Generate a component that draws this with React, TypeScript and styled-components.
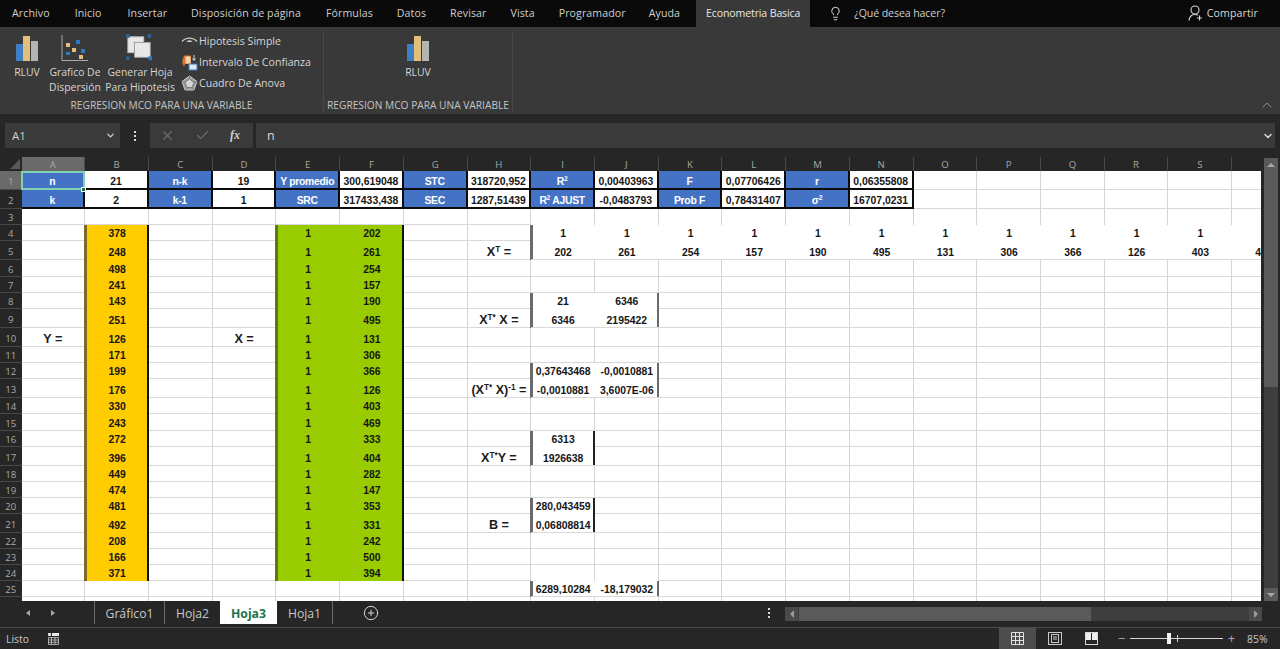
import React from "react";
import styled, { createGlobalStyle } from "styled-components";
import { Check, ChevronDown, ChevronUp, CirclePlus, Lightbulb, X } from "lucide-react";

const UI_FONT = `"Open Sans", "Noto Sans", sans-serif`;
const CELL_FONT = `"Liberation Sans", Arial, sans-serif`;

const GlobalStyle = createGlobalStyle`
  html, body {
    margin: 0;
    padding: 0;
    background: #262626;
    overflow: hidden;
  }
  * { box-sizing: border-box; }
  sup { font-size: 65%; line-height: 0; vertical-align: 4px; }
`;

const Page = styled.div`
  width: 1280px;
  height: 649px;
  display: flex;
  flex-direction: column;
  overflow: hidden;
  font-family: ${UI_FONT};
  color: #d8d8d8;
  background: #262626;
`;

/* ---- top tabs ---- */

const TabBar = styled.div`
  height: 27px;
  flex: none;
  display: flex;
  align-items: stretch;
  background: #0a0a0a;
  font-size: 10.6px;
  letter-spacing: 0.1px;
`;

const MenuTab = styled.div<{ $left: number; $active?: boolean }>`
  margin-left: ${(p) => p.$left}px;
  padding: 0 ${(p) => (p.$active ? "10px" : "0")} 1px;
  flex: none;
  display: flex;
  align-items: center;
  white-space: nowrap;
  letter-spacing: ${(p) => (p.$active ? "-0.15px" : "inherit")};
  color: ${(p) => (p.$active ? "#e6e6e6" : "#cfcfcf")};
  background: ${(p) => (p.$active ? "#393939" : "transparent")};
`;

const AskLabel = styled(MenuTab)`
  letter-spacing: -0.1px;
`;

const TabSpacer = styled.div`
  flex: 1;
`;

const ShareBox = styled.div`
  display: flex;
  align-items: center;
  gap: 4px;
  padding: 0 22px 1px 0;
`;

const BulbBox = styled.div`
  margin-left: 18px;
  display: flex;
  align-items: center;
  color: #e4e4e4;
`;

/* ---- ribbon ---- */

const Ribbon = styled.div`
  height: 87px;
  flex: none;
  display: flex;
  position: relative;
  background: #393939;
`;

const RibbonGroup = styled.div<{ $width: number }>`
  width: ${(p) => p.$width}px;
  flex: none;
  margin-top: 4px;
  margin-bottom: 2px;
  border-right: 1px solid #4a4a4a;
  display: flex;
  flex-direction: column;
`;

const GroupBody = styled.div<{ $pad: number }>`
  flex: 1;
  display: flex;
  padding-left: ${(p) => p.$pad}px;
`;

const GroupLabel = styled.div`
  height: 15px;
  text-align: center;
  font-size: 10.2px;
  line-height: 16px;
  white-space: nowrap;
  color: #c4c4c4;
`;

const BigButton = styled.div<{ $width: number }>`
  width: ${(p) => p.$width}px;
  flex: none;
  display: flex;
  flex-direction: column;
  align-items: center;
  padding-top: 1px;
  font-size: 10.4px;
  line-height: 15px;
  text-align: center;
  white-space: nowrap;
  color: #d6d6d6;
`;

const BigIcon = styled.div`
  height: 32px;
  margin-bottom: 1px;
  display: flex;
  align-items: center;
`;

const SmallColumn = styled.div`
  margin-left: 5px;
  padding-top: 2px;
  display: flex;
  flex-direction: column;
  gap: 5px;
`;

const SmallButton = styled.div`
  height: 16px;
  display: flex;
  align-items: center;
  gap: 1px;
  font-size: 10.6px;
  white-space: nowrap;
  color: #d6d6d6;
`;

const CollapseBox = styled.div`
  position: absolute;
  right: 5px;
  bottom: 1px;
  color: #a0a0a0;
  display: flex;
`;

/* ---- formula bar ---- */

const FormulaBar = styled.div`
  height: 43px;
  flex: none;
  padding: 9px 5px 9px 5px;
  display: flex;
  background: #262626;
`;

const NameBox = styled.div`
  width: 115px;
  flex: none;
  padding: 0 4px 0 7px;
  display: flex;
  align-items: center;
  justify-content: space-between;
  background: #3a3a3a;
  font-size: 11.5px;
  color: #d0d0d0;
`;

const DotsBox = styled.div`
  width: 30px;
  flex: none;
  display: flex;
  flex-direction: column;
  align-items: center;
  justify-content: center;
  gap: 2px;
`;

const Dot = styled.span`
  width: 2px;
  height: 2px;
  background: #d8d8d8;
`;

const ActionBox = styled.div`
  width: 103px;
  flex: none;
  padding-left: 10px;
  display: flex;
  align-items: center;
  gap: 20px;
  background: #3a3a3a;
  color: #6e6e6e;
`;

const FxLabel = styled.span`
  font-family: "Liberation Serif", serif;
  font-style: italic;
  font-weight: 700;
  font-size: 12px;
  color: #cfcfcf;
`;

const FormulaInput = styled.div`
  flex: 1;
  margin-left: 3px;
  padding: 0 1px 0 11px;
  display: flex;
  align-items: center;
  justify-content: space-between;
  background: #3a3a3a;
  font-size: 12.5px;
  color: #d8d8d8;
`;

/* ---- sheet ---- */

const rowHeights = [19, 19, 16, 16, 19, 17, 16, 16, 19, 19, 16, 16, 19, 16, 17, 16, 19, 16, 16, 16, 19, 16, 16, 16, 16, 16];
const columns = "ABCDEFGHIJKLMNOPQRST".split("");

const SheetArea = styled.div`
  height: 444px;
  flex: none;
  display: flex;
  background: #262626;
`;

const Sheet = styled.div`
  width: 1261px;
  height: 444px;
  flex: none;
  overflow: hidden;
  display: grid;
  position: relative;
  grid-template-columns: 21.5px repeat(20, 63.72px);
  grid-template-rows: 14px ${rowHeights.map((h) => `${h}px`).join(" ")};
  font-family: ${CELL_FONT};
  background: #fff;
`;

const Corner = styled.div`
  background: #262626;
  display: flex;
  align-items: flex-end;
  justify-content: flex-end;
  padding: 0 2px 2px 0;
`;

const CornerMark = styled.span`
  width: 0;
  height: 0;
  border-left: 10px solid transparent;
  border-bottom: 10px solid #5a5a5a;
`;

const ColHead = styled.div<{ $active?: boolean }>`
  display: flex;
  align-items: center;
  justify-content: center;
  background: ${(p) => (p.$active ? "#6a6a6a" : "#262626")};
  border-right: 1px solid #484848;
  font-family: ${UI_FONT};
  font-size: 9.6px;
  color: #a8a8a8;
`;

const RowHead = styled.div<{ $active?: boolean }>`
  display: flex;
  align-items: center;
  justify-content: center;
  padding-top: 2px;
  background: ${(p) => (p.$active ? "#6a6a6a" : "#262626")};
  border-bottom: 1px solid #484848;
  font-family: ${UI_FONT};
  font-size: 9.6px;
  color: #aaaaaa;
`;

type Tone = "plain" | "blue" | "value" | "yellow" | "green" | "matrix";

type CellSpec = {
  text?: React.ReactNode;
  tone?: Tone;
  big?: boolean;
  barLeft?: string;
  barRight?: string;
  noBottom?: boolean;
};

const fills: Record<Tone, string> = {
  plain: "#ffffff",
  blue: "#4472c4",
  value: "#ffffff",
  yellow: "#ffcc00",
  green: "#99cc00",
  matrix: "#ffffff",
};

const Cell = styled.div<{ $tone: Tone; $big?: boolean; $barLeft?: string; $barRight?: string; $noBottom?: boolean }>`
  min-width: 0;
  display: flex;
  align-items: flex-end;
  justify-content: center;
  white-space: nowrap;
  font-weight: 700;
  font-size: ${(p) => (p.$big ? "12.6px" : "10.4px")};
  letter-spacing: ${(p) => (p.$tone === "blue" ? "-0.3px" : "0")};
  line-height: ${(p) => (p.$big ? "13px" : "12px")};
  background: ${(p) => fills[p.$tone]};
  color: ${(p) => (p.$tone === "blue" ? "#ffffff" : p.$big ? "#1c1c1c" : "#161616")};
  position: ${(p) => (p.$barLeft || p.$barRight ? "relative" : "static")};
  z-index: ${(p) => (p.$barLeft || p.$barRight ? 1 : "auto")};
  padding-bottom: ${(p) => (p.$noBottom || p.$tone === "yellow" || p.$tone === "green" ? "1px" : "0")};
  border-right: ${(p) => {
    if (p.$tone === "blue" || p.$tone === "value") return "2px solid #0c0c0c";
    if (p.$tone === "yellow" || p.$tone === "green" || p.$tone === "matrix") return "none";
    return "1px solid #d4d4d4";
  }};
  border-bottom: ${(p) => {
    if (p.$tone === "blue" || p.$tone === "value") return "2px solid #0c0c0c";
    if (p.$noBottom || p.$tone === "yellow" || p.$tone === "green") return "none";
    return "1px solid #d8d8d8";
  }};
  box-shadow: ${(p) => {
    const shadows: string[] = [];
    if (p.$barLeft) shadows.push(`inset 2px 0 0 ${p.$barLeft}`, `-1px 0 0 ${p.$barLeft}`);
    if (p.$barRight) shadows.push(`inset -2px 0 0 ${p.$barRight}`);
    return shadows.length ? shadows.join(", ") : "none";
  }};
`;

const SelectionBox = styled.div`
  position: absolute;
  z-index: 2;
  left: 21px;
  top: 14px;
  width: 64px;
  height: 19px;
  border: 2px solid #7fd1b0;
  pointer-events: none;
`;

const SelectionHandle = styled.div`
  position: absolute;
  z-index: 2;
  left: 81px;
  top: 30px;
  width: 5px;
  height: 5px;
  background: #217346;
  border: 1px solid #ffffff;
`;

const VScroll = styled.div`
  flex: 1;
  padding: 1px 2px 0 3px;
  display: flex;
  flex-direction: column;
  background: #262626;
`;

const ScrollEnd = styled.div<{ $down?: boolean }>`
  height: 13px;
  flex: none;
  display: flex;
  align-items: center;
  justify-content: center;
  background: #5a5a5a;
  &::after {
    content: "";
    border-left: 4px solid transparent;
    border-right: 4px solid transparent;
    ${(p) => (p.$down ? "border-top: 4px solid #a8a8a8;" : "border-bottom: 4px solid #a8a8a8;")}
  }
`;

const VThumb = styled.div`
  height: 216px;
  flex: none;
  background: #5a5a5a;
`;

const VTrack = styled.div`
  flex: 1;
  background: #3e3e3e;
`;

/* ---- sheet tabs ---- */

const SheetTabs = styled.div`
  height: 27px;
  flex: none;
  display: flex;
  align-items: stretch;
  background: #262626;
  border-bottom: 1px solid #4a4a4a;
  padding-bottom: 3px;
`;

const NavArrows = styled.div`
  width: 94px;
  flex: none;
  padding-left: 26px;
  display: flex;
  align-items: center;
  gap: 21px;
`;

const NavArrow = styled.span<{ $right?: boolean }>`
  width: 0;
  height: 0;
  border-top: 3.5px solid transparent;
  border-bottom: 3.5px solid transparent;
  ${(p) => (p.$right ? "border-left: 4px solid #a8a8a8;" : "border-right: 4px solid #a8a8a8;")}
`;

const SheetTab = styled.div<{ $width: number; $active?: boolean; $divider?: boolean }>`
  width: ${(p) => p.$width}px;
  flex: none;
  padding-top: 2px;
  display: flex;
  align-items: center;
  justify-content: center;
  font-size: 12.2px;
  font-weight: ${(p) => (p.$active ? 700 : 400)};
  color: ${(p) => (p.$active ? "#217346" : "#c8c8c8")};
  background: ${(p) => (p.$active ? "#ffffff" : "transparent")};
  border-left: ${(p) => (p.$divider ? "1px solid #6a6a6a" : "none")};
`;

const TabDivider = styled.div`
  width: 1px;
  flex: none;
  background: #6a6a6a;
`;

const AddSheet = styled.div`
  margin-left: 30px;
  flex: none;
  display: flex;
  align-items: center;
  color: #d8d8d8;
`;

const SplitDots = styled(DotsBox)`
  margin-left: 375px;
`;

const HScroll = styled.div`
  width: 477px;
  flex: none;
  margin-left: 1px;
  margin-top: 6px;
  height: 14px;
  display: flex;
  background: #3e3e3e;
`;

const HEnd = styled.div<{ $right?: boolean }>`
  width: 13px;
  flex: none;
  display: flex;
  align-items: center;
  justify-content: center;
  background: #4a4a4a;
  &::after {
    content: "";
    border-top: 4px solid transparent;
    border-bottom: 4px solid transparent;
    ${(p) => (p.$right ? "border-left: 4px solid #9a9a9a;" : "border-right: 4px solid #9a9a9a;")}
  }
`;

const HThumb = styled.div`
  width: 292px;
  flex: none;
  margin-left: 1px;
  background: #5a5a5a;
`;

const HGap = styled.div`
  flex: 1;
`;

/* ---- status bar ---- */

const StatusBar = styled.div`
  flex: 1;
  display: flex;
  align-items: stretch;
  background: #262626;
  font-size: 10.4px;
  color: #c8c8c8;
`;

const StatusText = styled.div`
  width: 47px;
  flex: none;
  padding-left: 6px;
  display: flex;
  align-items: center;
`;

const StatusIcon = styled.div`
  flex: none;
  display: flex;
  align-items: center;
`;

const ViewGroup = styled.div`
  margin-left: 939px;
  flex: none;
  display: flex;
`;

const ViewButton = styled.div<{ $active?: boolean }>`
  width: 37px;
  display: flex;
  align-items: center;
  justify-content: center;
  background: ${(p) => (p.$active ? "#4d4d4d" : "transparent")};
`;

const ZoomBox = styled.div`
  margin-left: 7px;
  flex: none;
  display: flex;
  align-items: center;
  gap: 4px;
`;

const ZoomSign = styled.span`
  width: 9px;
  font-size: 13px;
  line-height: 13px;
  text-align: center;
  color: #a8a8a8;
`;

const ZoomTrack = styled.div`
  width: 93px;
  height: 1px;
  position: relative;
  background: #d8d8d8;
`;

const ZoomThumb = styled.span`
  position: absolute;
  left: 37px;
  top: -5px;
  width: 4px;
  height: 11px;
  background: #f0f0f0;
`;

const ZoomTick = styled.span`
  position: absolute;
  left: 47px;
  top: -3px;
  width: 1px;
  height: 7px;
  background: #d8d8d8;
`;

const ZoomValue = styled.span`
  margin-left: 7px;
  font-size: 10.4px;
  color: #c8c8c8;
`;

/* ---- drawings ---- */

const BarsIcon = () => (
  <svg width="24" height="26" viewBox="0 0 24 26">
    <rect x="1" y="9" width="7" height="17" fill="#3f7fc4" />
    <rect x="8" y="1" width="7" height="25" fill="#e3c07a" />
    <rect x="16" y="6" width="7" height="20" fill="#b4b4b4" />
  </svg>
);

const ScatterIcon = () => (
  <svg width="28" height="26" viewBox="0 0 28 26">
    <path d="M1 0V25.5H27" stroke="#a8a8a8" strokeWidth="1" fill="none" />
    <rect x="5" y="8" width="4" height="4" fill="#e3c07a" />
    <rect x="15" y="5" width="4" height="4" fill="#2f78c4" />
    <rect x="11" y="13" width="4" height="4" fill="#e3c07a" />
    <rect x="5" y="17" width="4" height="3" fill="#2f78c4" />
    <rect x="20" y="14" width="4" height="4" fill="#2f78c4" />
    <rect x="18" y="20" width="4" height="4" fill="#e3c07a" />
  </svg>
);

const SheetsIcon = () => (
  <svg width="30" height="28" viewBox="0 0 32 30">
    <rect x="3" y="3" width="17" height="17" fill="#e8e8e8" stroke="#bdbdbd" />
    <rect x="10" y="9" width="17" height="16" fill="#e8e8e8" stroke="#9a9a9a" />
    <rect x="1" y="0" width="4" height="4" fill="#2a5f99" />
    <rect x="24" y="0" width="4" height="4" fill="#2a5f99" />
    <rect x="1" y="24" width="4" height="4" fill="#2a5f99" />
    <rect x="25" y="24" width="4" height="4" fill="#2f78c4" />
  </svg>
);

const EyeIcon = () => (
  <svg width="17" height="12" viewBox="0 0 17 12">
    <path d="M1 6.5C5 2 12 2 16 6.5" stroke="#c8c8c8" strokeWidth="1.4" fill="none" />
    <path d="M5.5 7C6.5 4.8 10.5 4.8 11.5 7Z" fill="#c8c8c8" />
  </svg>
);

const IntervalIcon = () => (
  <svg width="17" height="17" viewBox="0 0 17 17">
    <path d="M1 8L3 1.5H10V10H4L3 13Z" fill="#d8742c" />
    <rect x="4.5" y="2.5" width="5" height="7" fill="#f2d5b0" />
    <path d="M13 1V6M11.5 4.5L13 6.5L14.5 4.5" stroke="#dcdcdc" strokeWidth="1" fill="none" />
    <rect x="8" y="10" width="8" height="6" fill="#dfe8f2" stroke="#3f7fc4" />
  </svg>
);

const AnovaIcon = () => (
  <svg width="17" height="16" viewBox="0 0 17 16">
    <path d="M8.5 1L16 6.5L13 15H4L1 6.5Z" fill="#9c9c9c" stroke="#c8c8c8" />
    <path d="M8.5 4L13 7.5L11 12.5H6L4 7.5Z" fill="#d6d6d6" stroke="#7a7a7a" />
    <path d="M8.5 1V4M16 6.5L13 7.5M13 15L11 12.5M4 15L6 12.5M1 6.5L4 7.5" stroke="#777" strokeWidth="0.8" />
  </svg>
);

const PersonIcon = () => (
  <svg width="15" height="16" viewBox="0 0 15 16">
    <circle cx="7" cy="5" r="4" stroke="#d8d8d8" strokeWidth="1.1" fill="none" />
    <path d="M1 15.5C1.5 11.5 4 9.5 7 9.5C8 9.5 9 9.7 9.8 10.2" stroke="#d8d8d8" strokeWidth="1.1" fill="none" />
    <path d="M11.5 10.5V15.5M9 13H14" stroke="#d8d8d8" strokeWidth="1.1" />
  </svg>
);

const CalcIcon = () => (
  <svg width="13" height="14" viewBox="0 0 13 14">
    <rect x="1" y="1" width="3" height="3" fill="#d8d8d8" />
    <rect x="5" y="1" width="7" height="3" fill="#e8e8e8" />
    <path d="M1.5 5.5H11.5V12.5H1.5ZM1.5 8H11.5M1.5 10.3H11.5M4.5 5.5V12.5M8 5.5V12.5" stroke="#c8c8c8" strokeWidth="0.8" fill="none" />
  </svg>
);

const GridViewIcon = () => (
  <svg width="13" height="13" viewBox="0 0 13 13">
    <path d="M0.5 0.5H12.5V12.5H0.5ZM0.5 4.5H12.5M0.5 8.5H12.5M4.5 0.5V12.5M8.5 0.5V12.5" stroke="#e2e2e2" fill="none" />
  </svg>
);

const PageViewIcon = () => (
  <svg width="14" height="13" viewBox="0 0 14 13">
    <rect x="0.5" y="0.5" width="13" height="12" stroke="#c8c8c8" fill="none" />
    <rect x="3.5" y="2.5" width="7" height="8" stroke="#c8c8c8" fill="none" />
    <path d="M5 5H9M5 7H9" stroke="#c8c8c8" />
  </svg>
);

const BreakViewIcon = () => (
  <svg width="13" height="13" viewBox="0 0 13 13">
    <rect x="0.5" y="0.5" width="12" height="12" stroke="#d8d8d8" fill="none" />
    <rect x="1" y="1" width="5" height="7" fill="#f0f0f0" />
    <rect x="7" y="1" width="5" height="7" fill="#f0f0f0" />
  </svg>
);

/* ---- data ---- */

const yValues = [378, 248, 498, 241, 143, 251, 126, 171, 199, 176, 330, 243, 272, 396, 449, 474, 481, 492, 208, 166, 371];
const xValues = [202, 261, 254, 157, 190, 495, 131, 306, 366, 126, 403, 469, 333, 404, 282, 147, 353, 331, 242, 500, 394];

const cellMap: Record<string, CellSpec> = {};

const put = (key: string, spec: CellSpec) => {
  cellMap[key] = { ...cellMap[key], ...spec };
};

const summary: [string, string, string, Tone][] = [
  ["A", "n", "k", "blue"],
  ["B", "21", "2", "value"],
  ["C", "n-k", "k-1", "blue"],
  ["D", "19", "1", "value"],
  ["E", "Y promedio", "SRC", "blue"],
  ["F", "300,619048", "317433,438", "value"],
  ["G", "STC", "SEC", "blue"],
  ["H", "318720,952", "1287,51439", "value"],
  ["J", "0,00403963", "-0,0483793", "value"],
  ["K", "F", "Prob F", "blue"],
  ["L", "0,07706426", "0,78431407", "value"],
  ["M", "r", "", "blue"],
  ["N", "0,06355808", "16707,0231", "value"],
];

summary.forEach(([col, first, second, tone]) => {
  put(`${col}1`, { text: first, tone });
  put(`${col}2`, { text: second, tone });
});

put("I1", { text: <span>R<sup>2</sup></span>, tone: "blue" });
put("I2", { text: <span>R<sup>2</sup> AJUST</span>, tone: "blue" });
put("M2", { text: <span>σ<sup>2</sup></span>, tone: "blue" });

yValues.forEach((v, i) => {
  put(`B${i + 4}`, { text: v, tone: "yellow", barLeft: "#7d6a2a", barRight: "#111" });
  put(`E${i + 4}`, { text: 1, tone: "green", barLeft: "#5d7a12" });
  put(`F${i + 4}`, { text: xValues[i], tone: "green", barRight: "#111" });
});

// the bars of the matrices, their cells have no gridlines inside
const matrix = (cols: string[], rows: number[], values: (string | number | undefined)[][], right?: string) => {
  rows.forEach((row, r) => {
    cols.forEach((col, c) => {
      put(`${col}${row}`, {
        text: values[r]?.[c],
        tone: "matrix",
        noBottom: r < rows.length - 1,
        barLeft: c === 0 ? "#6a6a6a" : undefined,
        barRight: c === cols.length - 1 ? right : undefined,
      });
    });
  });
};

const transposeCols = "IJKLMNOPQRST".split("");
// T4 lies under the scroll bar, only the start of T5 shows
const transposeOnes = transposeCols.map((col) => (col === "T" ? undefined : 1));
matrix(transposeCols, [4, 5], [transposeOnes, xValues.slice(0, 12)]);
matrix(["I", "J"], [8, 9], [[21, 6346], [6346, 2195422]], "#6a6a6a");
matrix(["I", "J"], [12, 13], [["0,37643468", "-0,0010881"], ["-0,0010881", "3,6007E-06"]], "#6a6a6a");
matrix(["I"], [16, 17], [[6313], [1926638]], "#222");
matrix(["I"], [20, 21], [["280,043459"], ["0,06808814"]], "#222");
matrix(["I", "J"], [25], [["6289,10284", "-18,179032"]], "#6a6a6a");

transposeCols.forEach((col) => put(`${col}3`, { noBottom: true }));
["I", "J"].forEach((col) => put(`${col}24`, { noBottom: true }));

put("A10", { text: "Y =", big: true });
put("D10", { text: "X =", big: true });
put("H5", { text: <span>X<sup>T</sup> =</span>, big: true });
put("H9", { text: <span>X<sup>T*</sup> X =</span>, big: true });
put("H13", { text: <span>(X<sup>T*</sup> X)<sup>-1</sup> =</span>, big: true });
put("H17", { text: <span>X<sup>T*</sup>Y =</span>, big: true });
put("H21", { text: "B =", big: true });

const menuTabs: [string, number][] = [
  ["Archivo", 12],
  ["Inicio", 25],
  ["Insertar", 26],
  ["Disposición de página", 24],
  ["Fórmulas", 25],
  ["Datos", 24],
  ["Revisar", 24],
  ["Vista", 24],
  ["Programador", 24],
  ["Ayuda", 23],
];

const App = () => {
  return (
    <Page>
      <GlobalStyle />
      <TabBar>
        {menuTabs.map(([name, left]) => (
          <MenuTab key={name} $left={left}>
            {name}
          </MenuTab>
        ))}
        <MenuTab $left={16} $active>
          Econometria Basica
        </MenuTab>
        <BulbBox>
          <Lightbulb size={15} strokeWidth={1.5} />
        </BulbBox>
        <AskLabel $left={11}>¿Qué desea hacer?</AskLabel>
        <TabSpacer />
        <ShareBox>
          <PersonIcon />
          Compartir
        </ShareBox>
      </TabBar>

      <Ribbon>
        <RibbonGroup $width={324}>
          <GroupBody $pad={8}>
            <BigButton $width={38}>
              <BigIcon>
                <BarsIcon />
              </BigIcon>
              RLUV
            </BigButton>
            <BigButton $width={58}>
              <BigIcon>
                <ScatterIcon />
              </BigIcon>
              Grafico De
              <br />
              Dispersión
            </BigButton>
            <BigButton $width={72}>
              <BigIcon>
                <SheetsIcon />
              </BigIcon>
              Generar Hoja
              <br />
              Para Hipotesis
            </BigButton>
            <SmallColumn>
              <SmallButton>
                <EyeIcon />
                Hipotesis Simple
              </SmallButton>
              <SmallButton>
                <IntervalIcon />
                Intervalo De Confianza
              </SmallButton>
              <SmallButton>
                <AnovaIcon />
                Cuadro De Anova
              </SmallButton>
            </SmallColumn>
          </GroupBody>
          <GroupLabel>REGRESION MCO PARA UNA VARIABLE</GroupLabel>
        </RibbonGroup>
        <RibbonGroup $width={189}>
          <GroupBody $pad={0}>
            <BigButton $width={188}>
              <BigIcon>
                <BarsIcon />
              </BigIcon>
              RLUV
            </BigButton>
          </GroupBody>
          <GroupLabel>REGRESION MCO PARA UNA VARIABLE</GroupLabel>
        </RibbonGroup>
        <CollapseBox>
          <ChevronUp size={16} strokeWidth={1.2} />
        </CollapseBox>
      </Ribbon>

      <FormulaBar>
        <NameBox>
          A1
          <ChevronDown size={11} strokeWidth={3} />
        </NameBox>
        <DotsBox>
          <Dot />
          <Dot />
          <Dot />
        </DotsBox>
        <ActionBox>
          <X size={15} strokeWidth={1.8} />
          <Check size={15} strokeWidth={1.8} />
          <FxLabel>fx</FxLabel>
        </ActionBox>
        <FormulaInput>
          n
          <ChevronDown size={12} strokeWidth={3} />
        </FormulaInput>
      </FormulaBar>

      <SheetArea>
        <Sheet>
          <Corner>
            <CornerMark />
          </Corner>
          {columns.map((col) => (
            <ColHead key={col} $active={col === "A"}>
              {col === "T" ? "" : col}
            </ColHead>
          ))}
          {rowHeights.map((_, r) => (
            <React.Fragment key={r}>
              <RowHead $active={r === 0}>{r < 25 ? r + 1 : ""}</RowHead>
              {columns.map((col) => {
                const spec = cellMap[`${col}${r + 1}`] ?? {};
                return (
                  <Cell
                    key={col}
                    $tone={spec.tone ?? "plain"}
                    $big={spec.big}
                    $barLeft={spec.barLeft}
                    $barRight={spec.barRight}
                    $noBottom={spec.noBottom}
                  >
                    {spec.text}
                  </Cell>
                );
              })}
            </React.Fragment>
          ))}
          <SelectionBox />
          <SelectionHandle />
        </Sheet>
        <VScroll>
          <ScrollEnd />
          <VThumb />
          <VTrack />
          <ScrollEnd $down />
        </VScroll>
      </SheetArea>

      <SheetTabs>
        <NavArrows>
          <NavArrow />
          <NavArrow $right />
        </NavArrows>
        <SheetTab $width={70} $divider>
          Gráfico1
        </SheetTab>
        <SheetTab $width={56} $divider>
          Hoja2
        </SheetTab>
        <SheetTab $width={57} $active>
          Hoja3
        </SheetTab>
        <SheetTab $width={55}>Hoja1</SheetTab>
        <TabDivider />
        <AddSheet>
          <CirclePlus size={16} strokeWidth={1.5} />
        </AddSheet>
        <SplitDots>
          <Dot />
          <Dot />
          <Dot />
        </SplitDots>
        <HScroll>
          <HEnd />
          <HThumb />
          <HGap />
          <HEnd $right />
        </HScroll>
      </SheetTabs>

      <StatusBar>
        <StatusText>Listo</StatusText>
        <StatusIcon>
          <CalcIcon />
        </StatusIcon>
        <ViewGroup>
          <ViewButton $active>
            <GridViewIcon />
          </ViewButton>
          <ViewButton>
            <PageViewIcon />
          </ViewButton>
          <ViewButton>
            <BreakViewIcon />
          </ViewButton>
        </ViewGroup>
        <ZoomBox>
          <ZoomSign>−</ZoomSign>
          <ZoomTrack>
            <ZoomThumb />
            <ZoomTick />
          </ZoomTrack>
          <ZoomSign>+</ZoomSign>
          <ZoomValue>85%</ZoomValue>
        </ZoomBox>
      </StatusBar>
    </Page>
  );
};

export default App;
